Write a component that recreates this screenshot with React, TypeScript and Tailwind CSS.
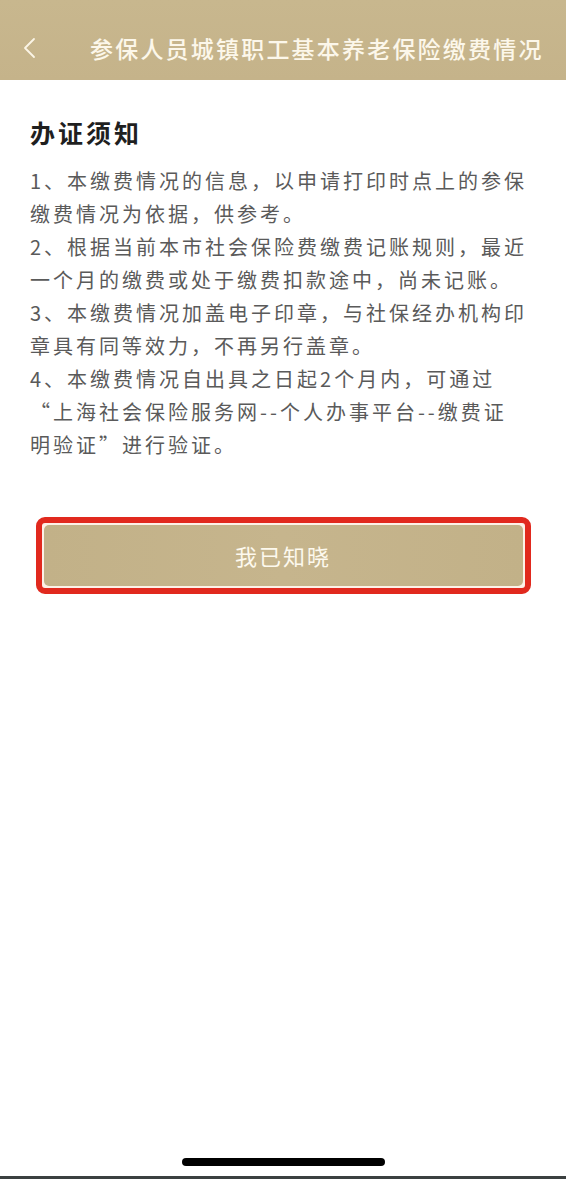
import React from 'react';

const noticeLines = [
  '1、本缴费情况的信息，以申请打印时点上的参保',
  '缴费情况为依据，供参考。',
  '2、根据当前本市社会保险费缴费记账规则，最近',
  '一个月的缴费或处于缴费扣款途中，尚未记账。',
  '3、本缴费情况加盖电子印章，与社保经办机构印',
  '章具有同等效力，不再另行盖章。',
  '4、本缴费情况自出具之日起2个月内，可通过',
  '“上海社会保险服务网--个人办事平台--缴费证',
  '明验证”进行验证。',
];

const BackIcon = () => (
  <svg width="14" height="22" viewBox="0 0 14 22" fill="none">
    <polyline
      points="12,2 3,11 12,20"
      stroke="#fbf5e6"
      strokeWidth="1.8"
      strokeLinecap="round"
      strokeLinejoin="round"
    />
  </svg>
);

const App = () => {
  return (
    <div
      className="flex h-[1179px] w-[566px] flex-col overflow-hidden bg-white"
      style={{ fontFamily: '"Noto Sans CJK SC", "Noto Sans", sans-serif' }}
    >
      {/* Header */}
      <header className="h-[80px] shrink-0 bg-gradient-to-b from-[#c8b78e] to-[#c5b38a] pt-[24px]">
        <div className="flex h-[48px] items-center">
          <button className="ml-[22px] flex h-[48px] w-[20px] items-center">
            <BackIcon />
          </button>
          <h1 className="ml-[48px] whitespace-nowrap text-[23px] font-medium leading-none tracking-[2.2px] text-[#fcf7ea]">
            参保人员城镇职工基本养老保险缴费情况
          </h1>
        </div>
      </header>

      {/* Content */}
      <main className="flex-1 px-[30px] pt-[36px]">
        <h2 className="text-[25px] font-bold leading-[32px] tracking-[3px] text-[#1f1f1f]">
          办证须知
        </h2>
        <div className="mt-[16px] text-[20px] leading-[33px] tracking-[3px] text-[#5a5a5a]">
          {noticeLines.map((line, i) => (
            <p key={i} className="whitespace-nowrap">
              {line}
            </p>
          ))}
        </div>

        <div className="mx-auto mt-[56px] w-[495px] rounded-[9px] border-[6px] border-[#e1291e] bg-[#fdf1e8] p-[2px]">
          <button className="flex h-[61px] w-full items-center justify-center rounded-[5px] bg-gradient-to-r from-[#c2b188] via-[#c6b58d] to-[#c2b188] text-[22px] tracking-[2px] text-[#fdf9ee]">
            我已知晓
          </button>
        </div>
      </main>

      {/* Home indicator */}
      <footer className="flex shrink-0 flex-col items-center">
        <div className="h-[8px] w-[203px] rounded-full bg-black" />
        <div className="mt-[10px] h-[3px] w-full bg-[#3b4040]" />
      </footer>
    </div>
  );
};

export default App;
